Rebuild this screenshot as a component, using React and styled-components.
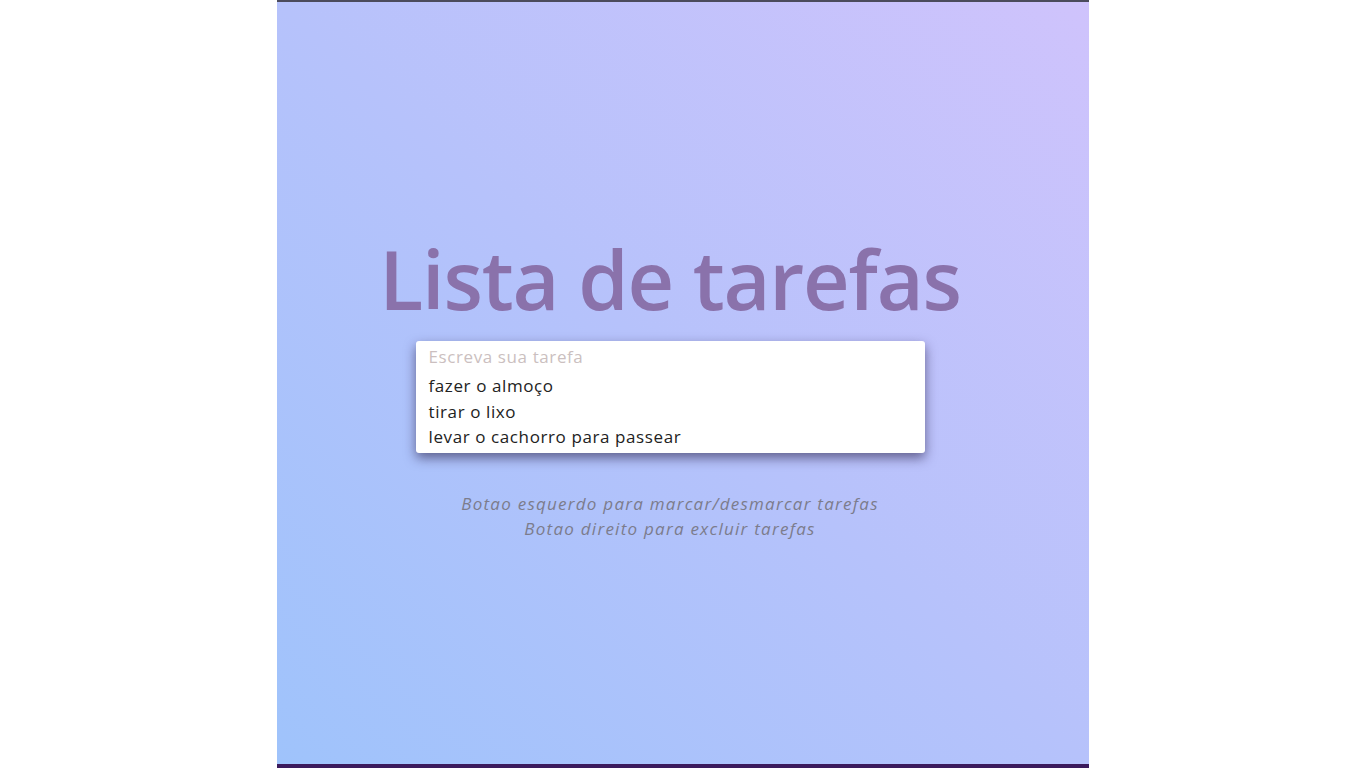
import React, { useState } from 'react';
import styled, { createGlobalStyle } from 'styled-components';

const GlobalStyle = createGlobalStyle`
  html, body {
    margin: 0;
    padding: 0;
    background: #ffffff;
  }
  body {
    font-family: "Open Sans", "Liberation Sans", sans-serif;
  }
`;

const Page = styled.div`
  display: flex;
  justify-content: center;
  width: 100%;
  height: 768px;
`;

const Panel = styled.main`
  width: 812px;
  height: 768px;
  box-sizing: border-box;
  border-top: 2px solid #4b4b5c;
  border-bottom: 4px solid #3b1a5c;
  background: linear-gradient(to top right, #9fc3fb 0%, #b6c2fb 50%, #cfc3fc 100%);
  display: flex;
  flex-direction: column;
  align-items: center;
  padding: 236px 26px 0 0;
`;

const Title = styled.h1`
  margin: 0;
  font-size: 81px;
  font-weight: 600;
  line-height: 1;
  color: #8a72ab;
  letter-spacing: -1.2px;
`;

const Card = styled.div`
  margin-top: 22px;
  width: 509px;
  background: #ffffff;
  border-radius: 3px;
  box-shadow: 0 5px 12px rgba(40, 30, 70, 0.6);
  padding: 4px 13px 3px;
  box-sizing: border-box;
`;

const Input = styled.input`
  display: block;
  width: 100%;
  border: none;
  outline: none;
  padding: 0;
  height: 22px;
  font-family: inherit;
  font-size: 17px;
  letter-spacing: 0.6px;
  color: #333;
  background: transparent;
  &::placeholder {
    color: #cbbfc0;
  }
`;

const List = styled.ul`
  list-style: none;
  margin: 6px 0 0;
  padding: 0;
`;

const Item = styled.li`
  font-size: 17px;
  letter-spacing: 0.6px;
  line-height: 25.5px;
  color: ${p => (p.done ? '#999' : '#222')};
  text-decoration: ${p => (p.done ? 'line-through' : 'none')};
  cursor: pointer;
  user-select: none;
`;

const Hints = styled.div`
  margin-top: 38px;
  text-align: center;
  font-style: italic;
  font-size: 17px;
  letter-spacing: 1.25px;
  line-height: 25px;
  color: #7c7c8c;
`;

export default function App() {
  const [tasks, setTasks] = useState([
    { text: 'fazer o almoço', done: false },
    { text: 'tirar o lixo', done: false },
    { text: 'levar o cachorro para passear', done: false },
  ]);
  const [value, setValue] = useState('');

  // enter adiciona a tarefa
  const handleKey = (e) => {
    if (e.key === 'Enter' && value.trim()) {
      setTasks([...tasks, { text: value.trim(), done: false }]);
      setValue('');
    }
  };

  const toggle = (i) => {
    setTasks(tasks.map((t, idx) => (idx === i ? { ...t, done: !t.done } : t)));
  };

  const remove = (e, i) => {
    e.preventDefault();
    setTasks(tasks.filter((_, idx) => idx !== i));
  };

  return (
    <>
      <GlobalStyle />
      <Page>
        <Panel>
          <Title>Lista de tarefas</Title>
          <Card>
            <Input
              placeholder="Escreva sua tarefa"
              value={value}
              onChange={(e) => setValue(e.target.value)}
              onKeyDown={handleKey}
            />
            <List>
              {tasks.map((t, i) => (
                <Item
                  key={i}
                  done={t.done}
                  onClick={() => toggle(i)}
                  onContextMenu={(e) => remove(e, i)}
                >
                  {t.text}
                </Item>
              ))}
            </List>
          </Card>
          <Hints>
            Botao esquerdo para marcar/desmarcar tarefas
            <br />
            Botao direito para excluir tarefas
          </Hints>
        </Panel>
      </Page>
    </>
  );
}
